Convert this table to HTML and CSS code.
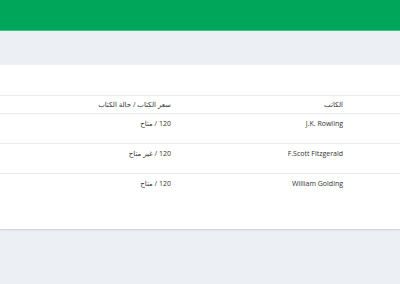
FILE: index.html
```html
<!DOCTYPE html>
<html lang="ar" dir="rtl">
<head>
<meta charset="utf-8">
<title>الكتب</title>
<link rel="stylesheet" href="styles.css">
</head>
<body>
<header class="topbar"></header>
<main class="content">
  <section class="box">
    <div class="box-head"></div>
    <table class="books">
      <thead>
        <tr><th class="gap"></th><th class="author">الكاتب</th><th class="price">سعر الكتاب / حالة الكتاب</th></tr>
      </thead>
      <tbody>
        <tr><td class="gap"></td><td class="author" dir="ltr">J.K. Rowling</td><td class="price">120 / متاح</td></tr>
        <tr><td class="gap"></td><td class="author" dir="ltr">F.Scott Fitzgerald</td><td class="price">120 / غير متاح</td></tr>
        <tr class="last"><td class="gap"></td><td class="author" dir="ltr">William Golding</td><td class="price">120 / متاح</td></tr>
      </tbody>
    </table>
  </section>
</main>
</body>
</html>
```
FILE: styles.css
```css
html, body {
  margin: 0;
  padding: 0;
}

body {
  background: #ecf0f5;
  font-family: "Open Sans", "Noto Sans", "DejaVu Sans", sans-serif;
  font-size: 7px;
  color: #333;
  height: 284px;
  overflow: hidden;
}

.topbar {
  height: 30px;
  background: #00a65a;
  border-bottom: 1px solid #3cc283;
}

.content {
  padding-top: 34px;
}

.box {
  background: #fff;
  height: 164px;
  box-shadow: 0 1px 0 #d2d6de, 0 2px 2px rgba(0, 0, 0, 0.05);
}

.box-head {
  height: 30px;
}

.books {
  width: 100%;
  border-collapse: collapse;
  table-layout: fixed;
}

.books th,
.books td {
  text-align: right;
  font-weight: normal;
  color: #333;
  border-top: 1px solid #ebebeb;
  padding: 0 8px;
  vertical-align: top;
  white-space: nowrap;
}

.books th {
  height: 17px;
  line-height: 17px;
}

.books td {
  height: 30px;
  padding-top: 5px;
  box-sizing: border-box;
  line-height: 10px;
}

.books .gap {
  width: 33px;
}

.books .author {
  width: 156px;
}
```
